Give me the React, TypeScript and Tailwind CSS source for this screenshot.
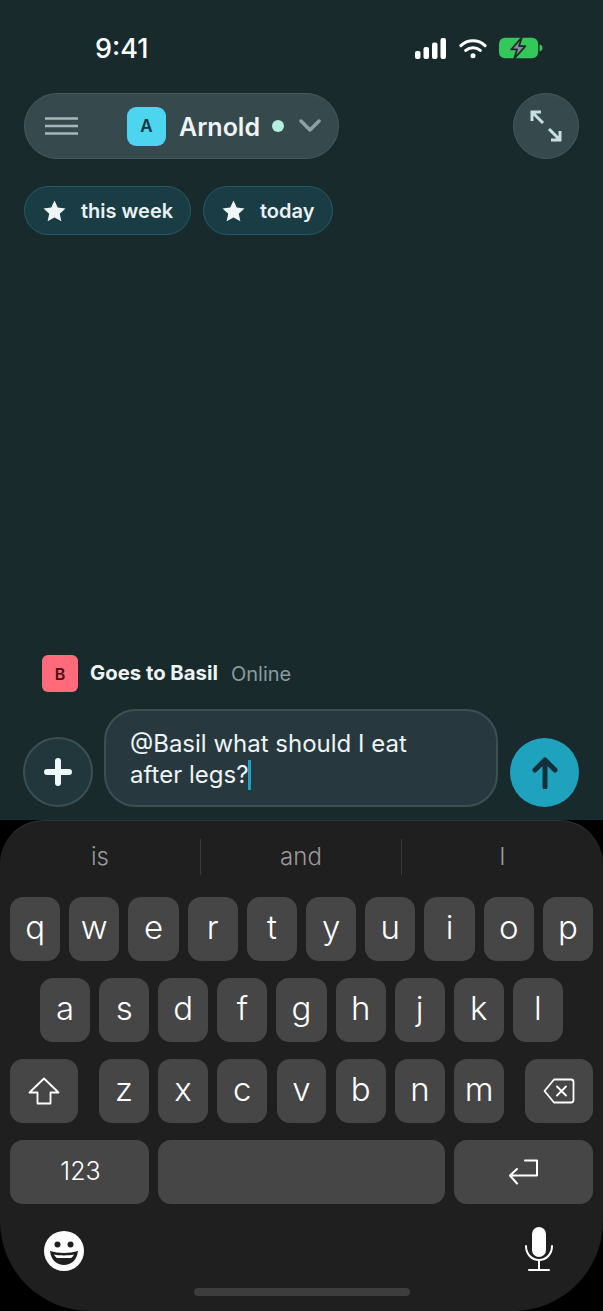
const rows = [
  ['q', 'w', 'e', 'r', 't', 'y', 'u', 'i', 'o', 'p'],
  ['a', 's', 'd', 'f', 'g', 'h', 'j', 'k', 'l'],
  ['z', 'x', 'c', 'v', 'b', 'n', 'm'],
];

function Key({ label }: { label: string }) {
  return (
    <div className="flex h-16 min-w-0 flex-1 items-center justify-center rounded-[13px] bg-[#464646] pb-[3px] text-[33px] font-light text-white">
      {label}
    </div>
  );
}

function StarIcon() {
  return (
    <svg width="23" height="22" viewBox="0 0 24 23" fill="#eef6f8">
      <path d="M12 .5l3.400 7.400 8.100.9-6 5.500 1.700 8-7.200-4.100-7.200 4.100 1.700-8-6-5.500 8.100-.9z" />
    </svg>
  );
}

function Chip({ label, width }: { label: string; width: string }) {
  return (
    <div className={`flex h-[49px] items-center gap-[15px] rounded-full border border-[#225c68] bg-[#1a3c45] pl-[18px] text-[20px] font-semibold text-[#e8f1f3] ${width}`}>
      <StarIcon />
      <span>{label}</span>
    </div>
  );
}

function StatusIcons() {
  return (
    <div className="flex items-center">
      <svg width="31" height="21" viewBox="0 0 31 21" fill="#fff">
        <rect x="0" y="13" width="5.500" height="8" rx="2" />
        <rect x="8.500" y="9" width="5.500" height="12" rx="2" />
        <rect x="17" y="4.500" width="5.500" height="16.500" rx="2" />
        <rect x="25.500" y="0" width="5.500" height="21" rx="2" />
      </svg>
      <svg className="ml-[13px]" width="28" height="21" viewBox="0 0 29 21" fill="none" stroke="#fff" strokeWidth="3.200" strokeLinecap="round">
        <path d="M2 7.500C9 .8 20 .8 27 7.500" />
        <path d="M7 12.500c4.300-3.800 10.700-3.800 15 0" />
        <circle cx="14.500" cy="18" r="2.600" fill="#fff" stroke="none" />
      </svg>
      <svg className="ml-[12px]" width="44" height="22" viewBox="0 0 45 22">
        <rect x="0" y="0.500" width="40" height="21" rx="6" fill="#34c759" />
        <path d="M41.500 7.500c2 .3 3 1.700 3 3.500s-1 3.200-3 3.500z" fill="#34c759" />
        <path d="M23.500 0l-11 12.500h6l-3 9.500 11.500-13h-6.500z" fill="#8e8e93" stroke="#192a2d" strokeWidth="1.800" strokeLinejoin="round" />
      </svg>
    </div>
  );
}

export default function App() {
  return (
    <div className="flex h-[1311px] w-[603px] flex-col overflow-hidden bg-black font-['Inter',sans-serif]">
      <div className="flex h-[820px] flex-col bg-[#192a2d]">
        <div className="flex h-[93px] items-start justify-between pl-[95px] pr-[60px] pt-[32px]">
          <span className="text-[27px] font-medium leading-[34px] text-white">9:41</span>
          <div className="pt-[5px]">
            <StatusIcons />
          </div>
        </div>

        <div className="flex items-center justify-between pl-[24px] pr-[24px]">
          <div className="flex h-[66px] w-[315px] items-center rounded-full border border-[#46595d] bg-[#36494d] pl-[20px]">
            <svg width="33" height="18" viewBox="0 0 33 18" stroke="#a9b6b8" strokeWidth="2.400">
              <path d="M0 1.500h33M0 9h33M0 16.500h33" />
            </svg>
            <div className="ml-[49px] flex h-[39px] w-[39px] items-center justify-center rounded-[9px] bg-[#4dd4ee] pt-[1px] text-[17px] font-semibold text-[#10333d]">
              A
            </div>
            <span className="ml-[13px] pt-[4px] text-[25px] font-semibold text-[#eef4f5]">Arnold</span>
            <span className="ml-[12px] h-[12px] w-[12px] rounded-full bg-[#b4eedd]" />
            <svg className="ml-[15px]" width="22" height="14" viewBox="0 0 22 14" fill="none" stroke="#8fa0a3" strokeWidth="3.500" strokeLinecap="round" strokeLinejoin="round">
              <path d="M2 2l9 9 9-9" />
            </svg>
          </div>
          <div className="flex h-[66px] w-[66px] items-center justify-center rounded-full border border-[#46595d] bg-[#36494d]">
            <svg width="32" height="32" viewBox="0 0 32 32" fill="none" stroke="#c9e0e3" strokeWidth="3">
              <path d="M2 11V2h9M2 2l11 11M30 21v9h-9M30 30L19 19" />
            </svg>
          </div>
        </div>

        <div className="mt-[27px] flex gap-[12px] pl-[24px]">
          <Chip label="this week" width="w-[167px]" />
          <Chip label="today" width="w-[130px]" />
        </div>

        <div className="mt-auto flex items-center pl-[42px]">
          <div className="flex h-[37px] w-[36px] items-center justify-center rounded-[6px] bg-[#ff6b7a] text-[16px] font-semibold text-[#4a0d16]">
            B
          </div>
          <span className="ml-[12px] text-[20.300px] font-bold text-[#eef4f5]">Goes to Basil</span>
          <span className="ml-[13px] text-[20px] text-[#8a9a9d]">Online</span>
        </div>

        <div className="mb-[13px] mt-[17px] flex items-end pl-[23px] pr-[24px]">
          <div className="flex h-[70px] w-[70px] items-center justify-center rounded-full border-2 border-[#3c5054] bg-[#22373c]">
            <svg width="28" height="28" viewBox="0 0 28 28" stroke="#eef6f8" strokeWidth="6" strokeLinecap="round">
              <path d="M14 3v22M3 14h22" />
            </svg>
          </div>
          <div className="ml-[11px] h-[98px] w-[394px] rounded-[32px] border-2 border-[#3c5054] bg-[#27393e] pl-[24px] pt-[17px] text-[24px] leading-[31px] text-[#eef4f5]">
            <div>@Basil what should I eat</div>
            <div className="flex items-center">
              after legs?
              <span className="h-[30px] w-[2.500px] bg-[#22a4c0]" />
            </div>
          </div>
          <div className="ml-auto flex h-[69px] w-[69px] items-center justify-center rounded-full bg-[#1ea2bd]">
            <svg width="26" height="32" viewBox="0 0 26 32" fill="none" stroke="#10303a" strokeWidth="5" strokeLinecap="round" strokeLinejoin="round">
              <path d="M13 30V4M3 13l10-10 10 10" />
            </svg>
          </div>
        </div>
      </div>

      <div className="flex flex-1 flex-col rounded-t-[44px] rounded-b-[90px] border-t border-[#333] bg-[#1f1f1f]">
        <div className="flex h-[76px] items-center pb-[4px] text-[24px] font-light text-[#9a9a9a]">
          <div className="flex h-[36px] w-[201px] items-center justify-center border-r border-[#3a3a3a]">is</div>
          <div className="flex h-[36px] w-[201px] items-center justify-center border-r border-[#3a3a3a]">and</div>
          <div className="flex h-[36px] flex-1 items-center justify-center">I</div>
        </div>

        <div className="flex flex-col gap-[17px] px-[10px]">
          <div className="flex gap-[9px]">
            {rows[0].map((k) => (
              <Key key={k} label={k} />
            ))}
          </div>
          <div className="flex gap-[9px] pl-[30px] pr-[30px]">
            {rows[1].map((k) => (
              <Key key={k} label={k} />
            ))}
          </div>
          <div className="flex items-center">
            <div className="flex h-16 w-[68px] items-center justify-center rounded-[13px] bg-[#464646]">
              <svg width="32" height="28" viewBox="0 0 32 28" fill="none" stroke="#fff" strokeWidth="1.800" strokeLinejoin="round">
                <path d="M16 1.500L1.500 15.500h8v11h13v-11h8z" />
              </svg>
            </div>
            <div className="mx-[21px] flex flex-1 gap-[9.500px]">
              {rows[2].map((k) => (
                <Key key={k} label={k} />
              ))}
            </div>
            <div className="flex h-16 w-[68px] items-center justify-center rounded-[13px] bg-[#464646]">
              <svg width="32" height="26" viewBox="0 0 32 26" fill="none" stroke="#fff" strokeWidth="1.800" strokeLinejoin="round" strokeLinecap="round">
                <path d="M11 1.500h17a2.500 2.500 0 0 1 2.500 2.500v18a2.500 2.500 0 0 1-2.500 2.500H11L1.500 13z" />
                <path d="M14 8.500l9 9M23 8.500l-9 9" />
              </svg>
            </div>
          </div>
          <div className="flex gap-[9px]">
            <div className="flex h-16 w-[139px] items-center justify-center rounded-[13px] bg-[#464646] pl-[2px] text-[25px] font-light text-white">
              123
            </div>
            <div className="h-16 flex-1 rounded-[13px] bg-[#464646]" />
            <div className="flex h-16 w-[139px] items-center justify-center rounded-[13px] bg-[#464646]">
              <svg width="31" height="27" viewBox="0 0 31 27" fill="none" stroke="#fff" strokeWidth="2" strokeLinecap="round" strokeLinejoin="round">
                <path d="M17 1.500h12v15H2M9 10l-7 6.500 7 8" />
              </svg>
            </div>
          </div>
        </div>

        <div className="mt-[24px] flex items-start justify-between pl-[44px] pr-[50px]">
          <svg className="mt-[3px]" width="40" height="40" viewBox="0 0 40 40">
            <circle cx="20" cy="20" r="20" fill="#fff" />
            <circle cx="13.500" cy="13.500" r="3" fill="#1f1f1f" />
            <circle cx="26.500" cy="13.500" r="3" fill="#1f1f1f" />
            <path d="M6 20c9 2.500 19 2.500 28 0-1 9-7 14-14 14S7 29 6 20z" fill="#1f1f1f" />
            <path d="M10 23.500c6 1.200 14 1.200 20 0-1 1.800-2 3-3 3.500H13c-1-.5-2-1.700-3-3.500z" fill="#fff" />
          </svg>
          <svg className="-mt-[1px]" width="28" height="44" viewBox="0 0 28 44" fill="none" stroke="#fff" strokeWidth="2" strokeLinecap="round">
            <rect x="7" y="0" width="14" height="30" rx="7" fill="#fff" stroke="none" />
            <path d="M1 19c0 8 5.500 14 13 14s13-6 13-14M14 33v9M4 43h20" />
          </svg>
        </div>

        <div className="mx-auto mt-[17px] h-[8px] w-[216px] rounded-full bg-[#3d3d3d]" />
      </div>
    </div>
  );
}
